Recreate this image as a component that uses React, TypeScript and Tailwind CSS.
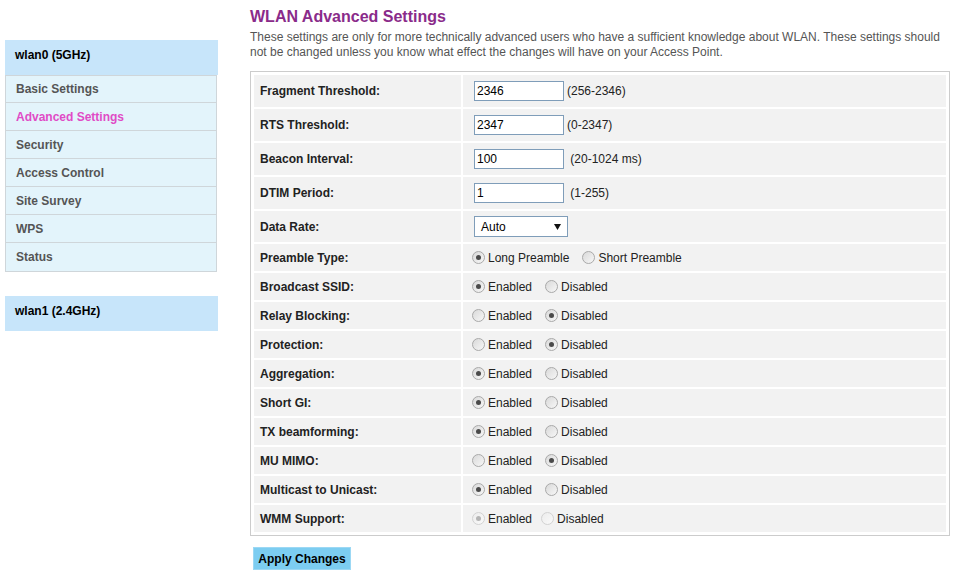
import React from "react";

const MENU = [
  "Basic Settings",
  "Advanced Settings",
  "Security",
  "Access Control",
  "Site Survey",
  "WPS",
  "Status",
];

type RadioRow = {
  label: string;
  a: string;
  b: string;
  on: 0 | 1;
  disabled?: boolean;
};

const TEXT_ROWS = [
  { label: "Fragment Threshold:", value: "2346", hint: "(256-2346)" },
  { label: "RTS Threshold:", value: "2347", hint: "(0-2347)" },
  { label: "Beacon Interval:", value: "100", hint: "\u00a0(20-1024 ms)" },
  { label: "DTIM Period:", value: "1", hint: "\u00a0(1-255)" },
];

const RADIO_ROWS: RadioRow[] = [
  { label: "Preamble Type:", a: "Long Preamble", b: "Short Preamble", on: 0 },
  { label: "Broadcast SSID:", a: "Enabled", b: "Disabled", on: 0 },
  { label: "Relay Blocking:", a: "Enabled", b: "Disabled", on: 1 },
  { label: "Protection:", a: "Enabled", b: "Disabled", on: 1 },
  { label: "Aggregation:", a: "Enabled", b: "Disabled", on: 0 },
  { label: "Short GI:", a: "Enabled", b: "Disabled", on: 0 },
  { label: "TX beamforming:", a: "Enabled", b: "Disabled", on: 0 },
  { label: "MU MIMO:", a: "Enabled", b: "Disabled", on: 1 },
  { label: "Multicast to Unicast:", a: "Enabled", b: "Disabled", on: 0 },
  { label: "WMM Support:", a: "Enabled", b: "Disabled", on: 0, disabled: true },
];

function Radio({ checked, disabled }: { checked: boolean; disabled?: boolean }) {
  return (
    <span
      className={`flex h-[13px] w-[13px] shrink-0 items-center justify-center rounded-full border bg-linear-to-br ${
        disabled
          ? "border-[#d2d2d2] from-[#ececec] to-[#fafafa]"
          : "border-[#a9a9a9] from-[#d9d9d9] to-[#f7f7f7]"
      }`}
    >
      {checked && (
        <span
          className={`h-[5px] w-[5px] rounded-full ${disabled ? "bg-[#b4b4b4]" : "bg-[#4a4a4a]"}`}
        />
      )}
    </span>
  );
}

function Label({ children, h }: { children: React.ReactNode; h: string }) {
  return (
    <div className={`flex items-center bg-[#f2f2f2] pl-[6px] text-[12px] font-bold text-[#222] ${h}`}>
      {children}
    </div>
  );
}

export default function App() {
  return (
    <div
      className="flex min-h-[583px] w-[964px] items-start bg-white text-[12px] text-[#222]"
      style={{ fontFamily: '"Liberation Sans", Arial, sans-serif' }}
    >
      {/* ── Sidebar ── */}
      <aside className="ml-[5px] mt-[40px] w-[213px]">
        <div className="h-[35px] bg-[#c7e5fa] pl-[10px] pt-[8px] text-[12px] font-bold leading-[14px] text-black">
          wlan0 (5GHz)
        </div>
        <ul className="w-[212px] divide-y divide-[#cfd6da] border border-[#cfd6da] bg-[#e3f4fb]">
          {MENU.map((m) => (
            <li
              key={m}
              className={`flex h-[28px] items-center pl-[10px] text-[12px] font-bold first:h-[27px] ${
                m === "Advanced Settings" ? "text-[#e04bc6]" : "text-[#555]"
              }`}
            >
              {m}
            </li>
          ))}
        </ul>
        <div className="mt-[24px] h-[35px] bg-[#c7e5fa] pl-[10px] pt-[8px] text-[12px] font-bold leading-[14px] text-black">
          wlan1 (2.4GHz)
        </div>
      </aside>

      {/* ── Main ── */}
      <main className="ml-[32px] w-[700px] pt-[8px]">
        <h1 className="text-[16px] font-bold leading-[18px] text-[#8a2b8a]">WLAN Advanced Settings</h1>
        <p className="mt-[4px] text-[12px] leading-[15px] text-[#555]">
          These settings are only for more technically advanced users who have a sufficient knowledge about WLAN. These settings should
          <br />
          not be changed unless you know what effect the changes will have on your Access Point.
        </p>

        <div className="mt-[11px] grid grid-cols-[207px_483px] gap-[2px] border border-[#cccccc] p-[3px]">
          {TEXT_ROWS.map((r) => (
            <React.Fragment key={r.label}>
              <Label h="h-[32px]">{r.label}</Label>
              <div className="flex h-[32px] items-center bg-[#f2f2f2] pl-[11px]">
                <input
                  readOnly
                  value={r.value}
                  className="h-[20px] w-[90px] border border-[#7f9db9] bg-white px-[2px] text-[12px] text-black outline-none"
                />
                <span className="ml-[3px]">{r.hint}</span>
              </div>
            </React.Fragment>
          ))}

          <Label h="h-[31px]">Data Rate:</Label>
          <div className="flex h-[31px] items-center bg-[#f2f2f2] pl-[11px]">
            <div className="flex h-[21px] w-[94px] items-center justify-between border border-[#7f9db9] bg-white pl-[6px] pr-[6px] text-[12px] text-black">
              <span>Auto</span>
              <svg width="7" height="6" viewBox="0 0 7 6">
                <path d="M0 0H7L3.5 6Z" fill="#111" />
              </svg>
            </div>
          </div>

          {RADIO_ROWS.map((r) => (
            <React.Fragment key={r.label}>
              <Label h="h-[27px]">{r.label}</Label>
              <div className="flex h-[27px] items-center bg-[#f2f2f2] pl-[9px] text-[12px]">
                <Radio checked={r.on === 0} disabled={r.disabled} />
                <span className="ml-[3px]">{r.a}</span>
                <span className={r.disabled ? "ml-[9px]" : "ml-[13px]"}>
                  <Radio checked={r.on === 1} disabled={r.disabled} />
                </span>
                <span className="ml-[3px]">{r.b}</span>
              </div>
            </React.Fragment>
          ))}
        </div>

        <button className="ml-[3px] mt-[11px] h-[23px] w-[98px] border border-[#9cd8f4] bg-[#7ccdf1] text-[12px] font-bold text-black">
          Apply Changes
        </button>
      </main>
    </div>
  );
}
